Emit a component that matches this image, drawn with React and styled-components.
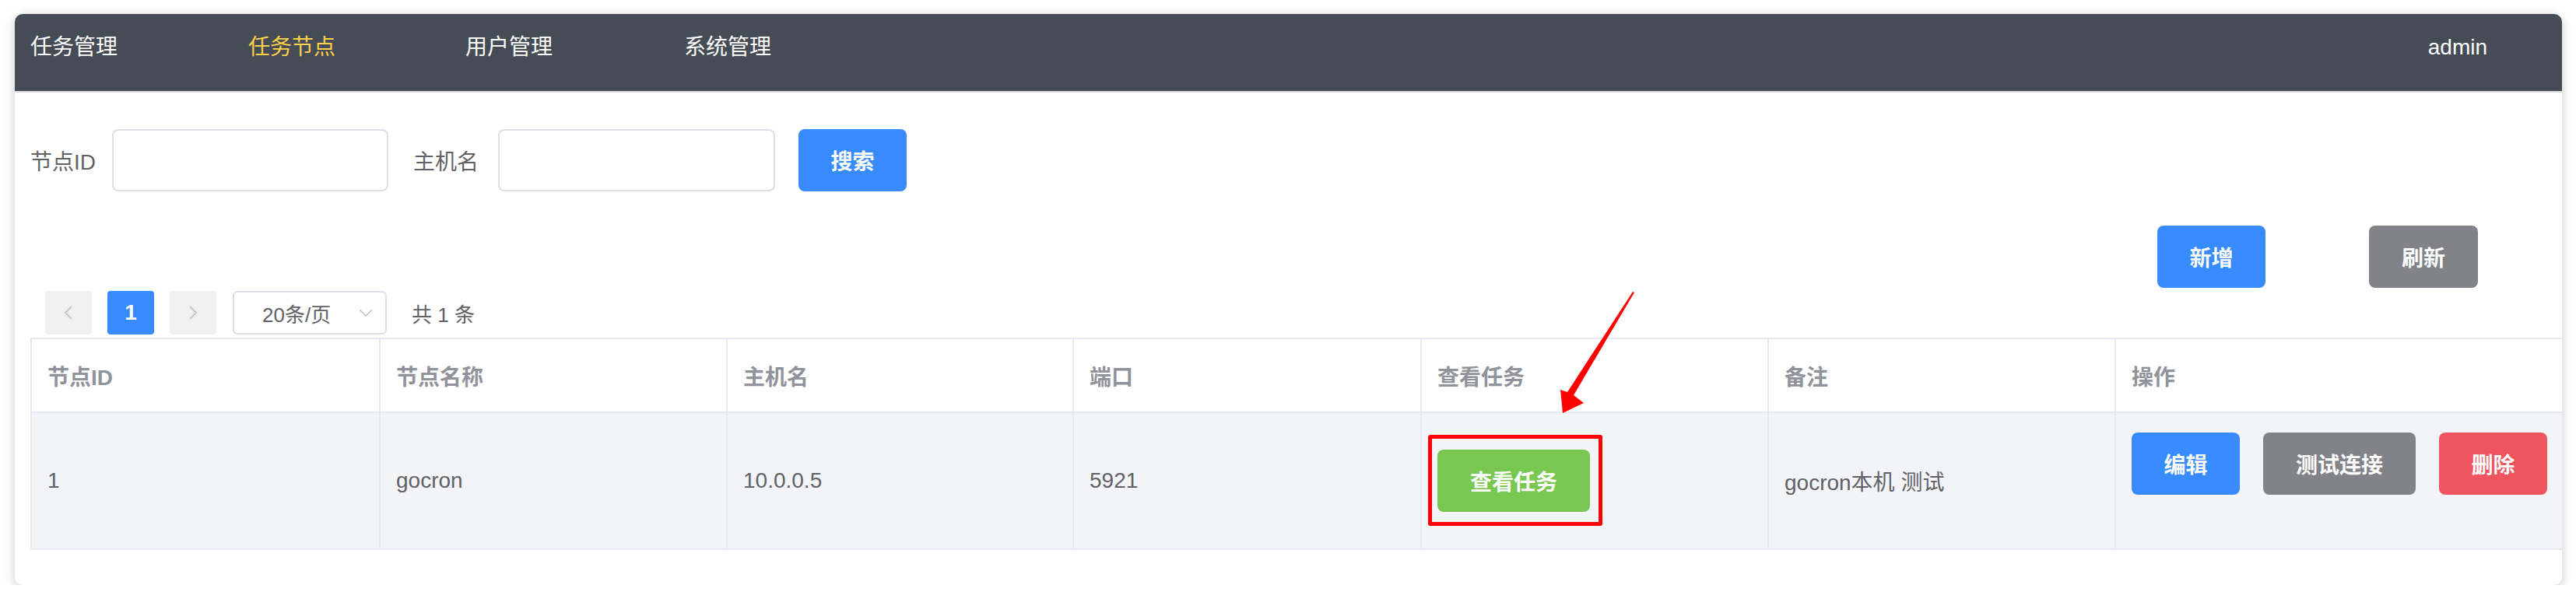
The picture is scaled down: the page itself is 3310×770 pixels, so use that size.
import React from 'react'
import styled, { createGlobalStyle } from 'styled-components'

const GlobalStyle = createGlobalStyle`
    html, body {
        margin: 0;
        padding: 0;
        background: #ffffff;
    }
    * {
        box-sizing: border-box;
    }
    body {
        font-family: "Liberation Sans", "Noto Sans CJK SC", sans-serif;
    }
`

const Window = styled.div`
    position: relative;
    width: 3273px;
    height: 734px;
    margin: 18px 0 0 19px;
    background: #ffffff;
    border-radius: 10px;
    overflow: hidden;
    box-shadow: 0 3px 14px rgba(0, 0, 0, 0.22);
`
const NavBar = styled.div`
    display: flex;
    height: 101px;
    background: #464c55;
    border-bottom: 2px solid #dedfe3;
`
const NavItem = styled.div`
    width: ${(p) => p.$width || 280}px;
    padding-left: 20px;
    line-height: 86px;
    font-size: 28px;
    color: ${(p) => (p.$active ? '#ffd04b' : '#ffffff')};
`
const NavUser = styled.div`
    margin-left: auto;
    margin-right: 96px;
    line-height: 86px;
    font-size: 28px;
    color: #ffffff;
`
const Content = styled.div`
    padding-left: 20px;
`
const SearchRow = styled.div`
    display: flex;
    align-items: center;
    height: 80px;
    margin-top: 47px;
`
const Label = styled.label`
    width: ${(p) => p.$width}px;
    margin-left: ${(p) => p.$offset || 0}px;
    font-size: 28px;
    color: #606266;
`
const Input = styled.div`
    width: ${(p) => p.$width}px;
    height: 80px;
    border: 2px solid #dcdfe6;
    border-radius: 8px;
    background: #ffffff;
`
const Button = styled.button`
    width: ${(p) => p.$width || 139}px;
    height: 80px;
    margin-left: ${(p) => p.$offset || 0}px;
    border: none;
    border-radius: 8px;
    background: ${(p) => p.$bg};
    color: #ffffff;
    font-family: inherit;
    font-size: 28px;
    font-weight: 600;
    padding: 0;
    cursor: pointer;
`
const Toolbar = styled.div`
    display: flex;
    justify-content: flex-end;
    gap: 133px;
    margin-top: 44px;
    padding-right: 108px;
`
const Pager = styled.div`
    display: flex;
    align-items: center;
    height: 56px;
    margin-top: 4px;
    padding-left: 19px;
`
const PageBtn = styled.div`
    display: flex;
    align-items: center;
    justify-content: center;
    width: 60px;
    height: 56px;
    margin-right: 20px;
    border-radius: 4px;
    background: ${(p) => (p.$active ? '#388bfd' : '#f0f0f1')};
    color: #ffffff;
    font-size: 28px;
    font-weight: 600;
`
const SizeSelect = styled.div`
    display: flex;
    align-items: center;
    width: 198px;
    height: 56px;
    margin-left: 1px;
    padding: 0 16px 0 36px;
    border: 2px solid #dcdfe6;
    border-radius: 6px;
    font-size: 26px;
    color: #606266;
    svg {
        margin-left: auto;
    }
`
const Total = styled.span`
    margin-left: 32px;
    font-size: 26px;
    color: #606266;
`
const Table = styled.div`
    display: grid;
    grid-template-columns: 448px 446px 445px 447px 446px 446px 575px;
    margin-top: 4px;
    border-top: 2px solid #e6e9f1;
    border-left: 2px solid #e6e9f1;
`
const HeadCell = styled.div`
    display: flex;
    align-items: center;
    height: 95px;
    padding-left: 20px;
    border-right: 2px solid #e6e9f1;
    border-bottom: 2px solid #e6e9f1;
    font-size: 28px;
    font-weight: 700;
    color: #909399;
`
const BodyCell = styled.div`
    position: relative;
    display: flex;
    align-items: ${(p) => (p.$top ? 'flex-start' : 'center')};
    height: 176px;
    padding-left: 20px;
    padding-top: ${(p) => (p.$top ? 25 : 0)}px;
    background: #f3f4f8;
    border-right: 2px solid #e6e9f1;
    border-bottom: 2px solid #e6e9f1;
    font-size: 28px;
    color: #606266;
`
const Actions = styled.div`
    display: flex;
    gap: 30px;
`
const Marked = styled.div`
    position: relative;
    &::after {
        content: '';
        position: absolute;
        left: -12px;
        right: -16px;
        top: -19px;
        bottom: -18px;
        border: 5px solid #ff0000;
        border-radius: 3px;
    }
`
const Arrow = styled.svg`
    position: absolute;
    left: 1961px;
    top: 352px;
    pointer-events: none;
`

const Chevron = ({ dir }) => (
    <svg width="14" height="20" viewBox="0 0 14 20">
        <path
            d={dir === 'left' ? 'M11 2 L3 10 L11 18' : 'M3 2 L11 10 L3 18'}
            fill="none"
            stroke="#c0c4cc"
            strokeWidth="2"
        />
    </svg>
)

const columns = ['节点ID', '节点名称', '主机名', '端口', '查看任务', '备注', '操作']

const App = () => {
    return (
        <>
            <GlobalStyle />
            <Window>
                <NavBar>
                    <NavItem>任务管理</NavItem>
                    <NavItem $active $width={279}>任务节点</NavItem>
                    <NavItem $width={281}>用户管理</NavItem>
                    <NavItem>系统管理</NavItem>
                    <NavUser>admin</NavUser>
                </NavBar>
                <Content>
                    <SearchRow>
                        <Label $width={105}>节点ID</Label>
                        <Input $width={355} />
                        <Label $width={109} $offset={32}>主机名</Label>
                        <Input $width={356} />
                        <Button $bg="#388bfd" $offset={30}>搜索</Button>
                    </SearchRow>
                    <Toolbar>
                        <Button $bg="#388bfd">新增</Button>
                        <Button $bg="#818389" $width={140}>刷新</Button>
                    </Toolbar>
                    <Pager>
                        <PageBtn><Chevron dir="left" /></PageBtn>
                        <PageBtn $active>1</PageBtn>
                        <PageBtn><Chevron dir="right" /></PageBtn>
                        <SizeSelect>
                            20条/页
                            <svg width="18" height="12" viewBox="0 0 18 12">
                                <path d="M1 2 L9 10 L17 2" fill="none" stroke="#c0c4cc" strokeWidth="1.6" />
                            </svg>
                        </SizeSelect>
                        <Total>共 1 条</Total>
                    </Pager>
                    <Table>
                        {columns.map((c) => (
                            <HeadCell key={c}>{c}</HeadCell>
                        ))}
                        <BodyCell>1</BodyCell>
                        <BodyCell>gocron</BodyCell>
                        <BodyCell>10.0.0.5</BodyCell>
                        <BodyCell>5921</BodyCell>
                        <BodyCell>
                            <Marked>
                                <Button $bg="#78c750" $width={196}>查看任务</Button>
                            </Marked>
                        </BodyCell>
                        <BodyCell>gocron本机 测试</BodyCell>
                        <BodyCell $top>
                            <Actions>
                                <Button $bg="#388bfd">编辑</Button>
                                <Button $bg="#818389" $width={196}>测试连接</Button>
                                <Button $bg="#f0555f">删除</Button>
                            </Actions>
                        </BodyCell>
                    </Table>
                </Content>
                <Arrow width="130" height="170" viewBox="1980 370 130 170">
                    <polygon
                        points="2100,376 2022,508 2035,518 2008,531 2005,501 2014,504 2098,375"
                        fill="#ff0000"
                    />
                </Arrow>
            </Window>
        </>
    )
}

export default App
